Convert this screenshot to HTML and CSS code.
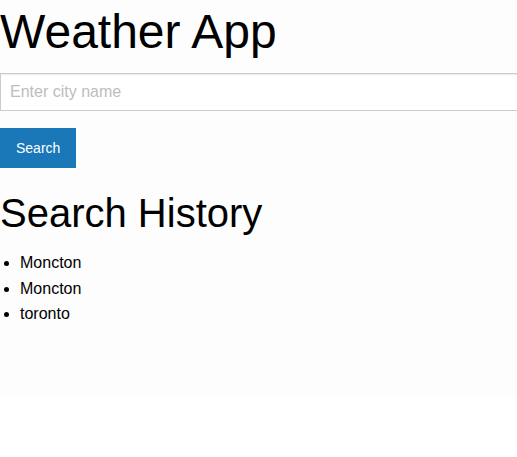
FILE: index.html
```html
<!DOCTYPE html>
<html lang="en">
<head>
<meta charset="utf-8">
<title>Weather App</title>
<link rel="stylesheet" href="styles.css">
</head>
<body>
<div class="app">
  <h1 class="title">Weather App</h1>
  <form class="search-form">
    <input class="city-input" type="text" placeholder="Enter city name">
    <button class="search-btn" type="button">Search</button>
  </form>
  <h2 class="history-title">Search History</h2>
  <ul class="history-list">
    <li class="history-item">Moncton</li>
    <li class="history-item">Moncton</li>
    <li class="history-item">toronto</li>
  </ul>
</div>
</body>
</html>
```
FILE: styles.css
```css
html, body {
  margin: 0;
  padding: 0;
  background: #ffffff;
  overflow: hidden;
}
body {
  font-family: "Liberation Sans", Arial, sans-serif;
  color: #000;
}
.app {
  background: #fdfdfd;
  padding: 4px 0 74px;
}
.title {
  margin: 0;
  font-size: 48px;
  font-weight: normal;
  line-height: 55px;
}
.search-form {
  margin: 14px 0 0;
}
.city-input {
  display: block;
  width: 100%;
  margin: 0;
  padding: 9px;
  border: 1px solid #cccccc;
  box-shadow: inset 0 1px 1px rgba(0, 0, 0, 0.08);
  background: #ffffff;
  font-family: "Liberation Sans", Arial, sans-serif;
  font-size: 16px;
  line-height: 18px;
  color: #333;
  outline: none;
}
.city-input::placeholder {
  color: #bdbdbd;
}
.search-btn {
  display: block;
  margin: 17px 0 0;
  padding: 12px 16px;
  border: none;
  background: #1a78b9;
  color: #ffffff;
  font-family: "Liberation Sans", Arial, sans-serif;
  font-size: 14px;
  line-height: 16px;
  cursor: pointer;
}
.history-title {
  margin: 22px 0 0;
  font-size: 40px;
  font-weight: normal;
  line-height: 46px;
}
.history-list {
  margin: 18px 0 0;
  padding-left: 20px;
  font-size: 16px;
}
.history-item {
  line-height: 18px;
  margin-bottom: 7.5px;
}
.history-item:last-child {
  margin-bottom: 0;
}
```
